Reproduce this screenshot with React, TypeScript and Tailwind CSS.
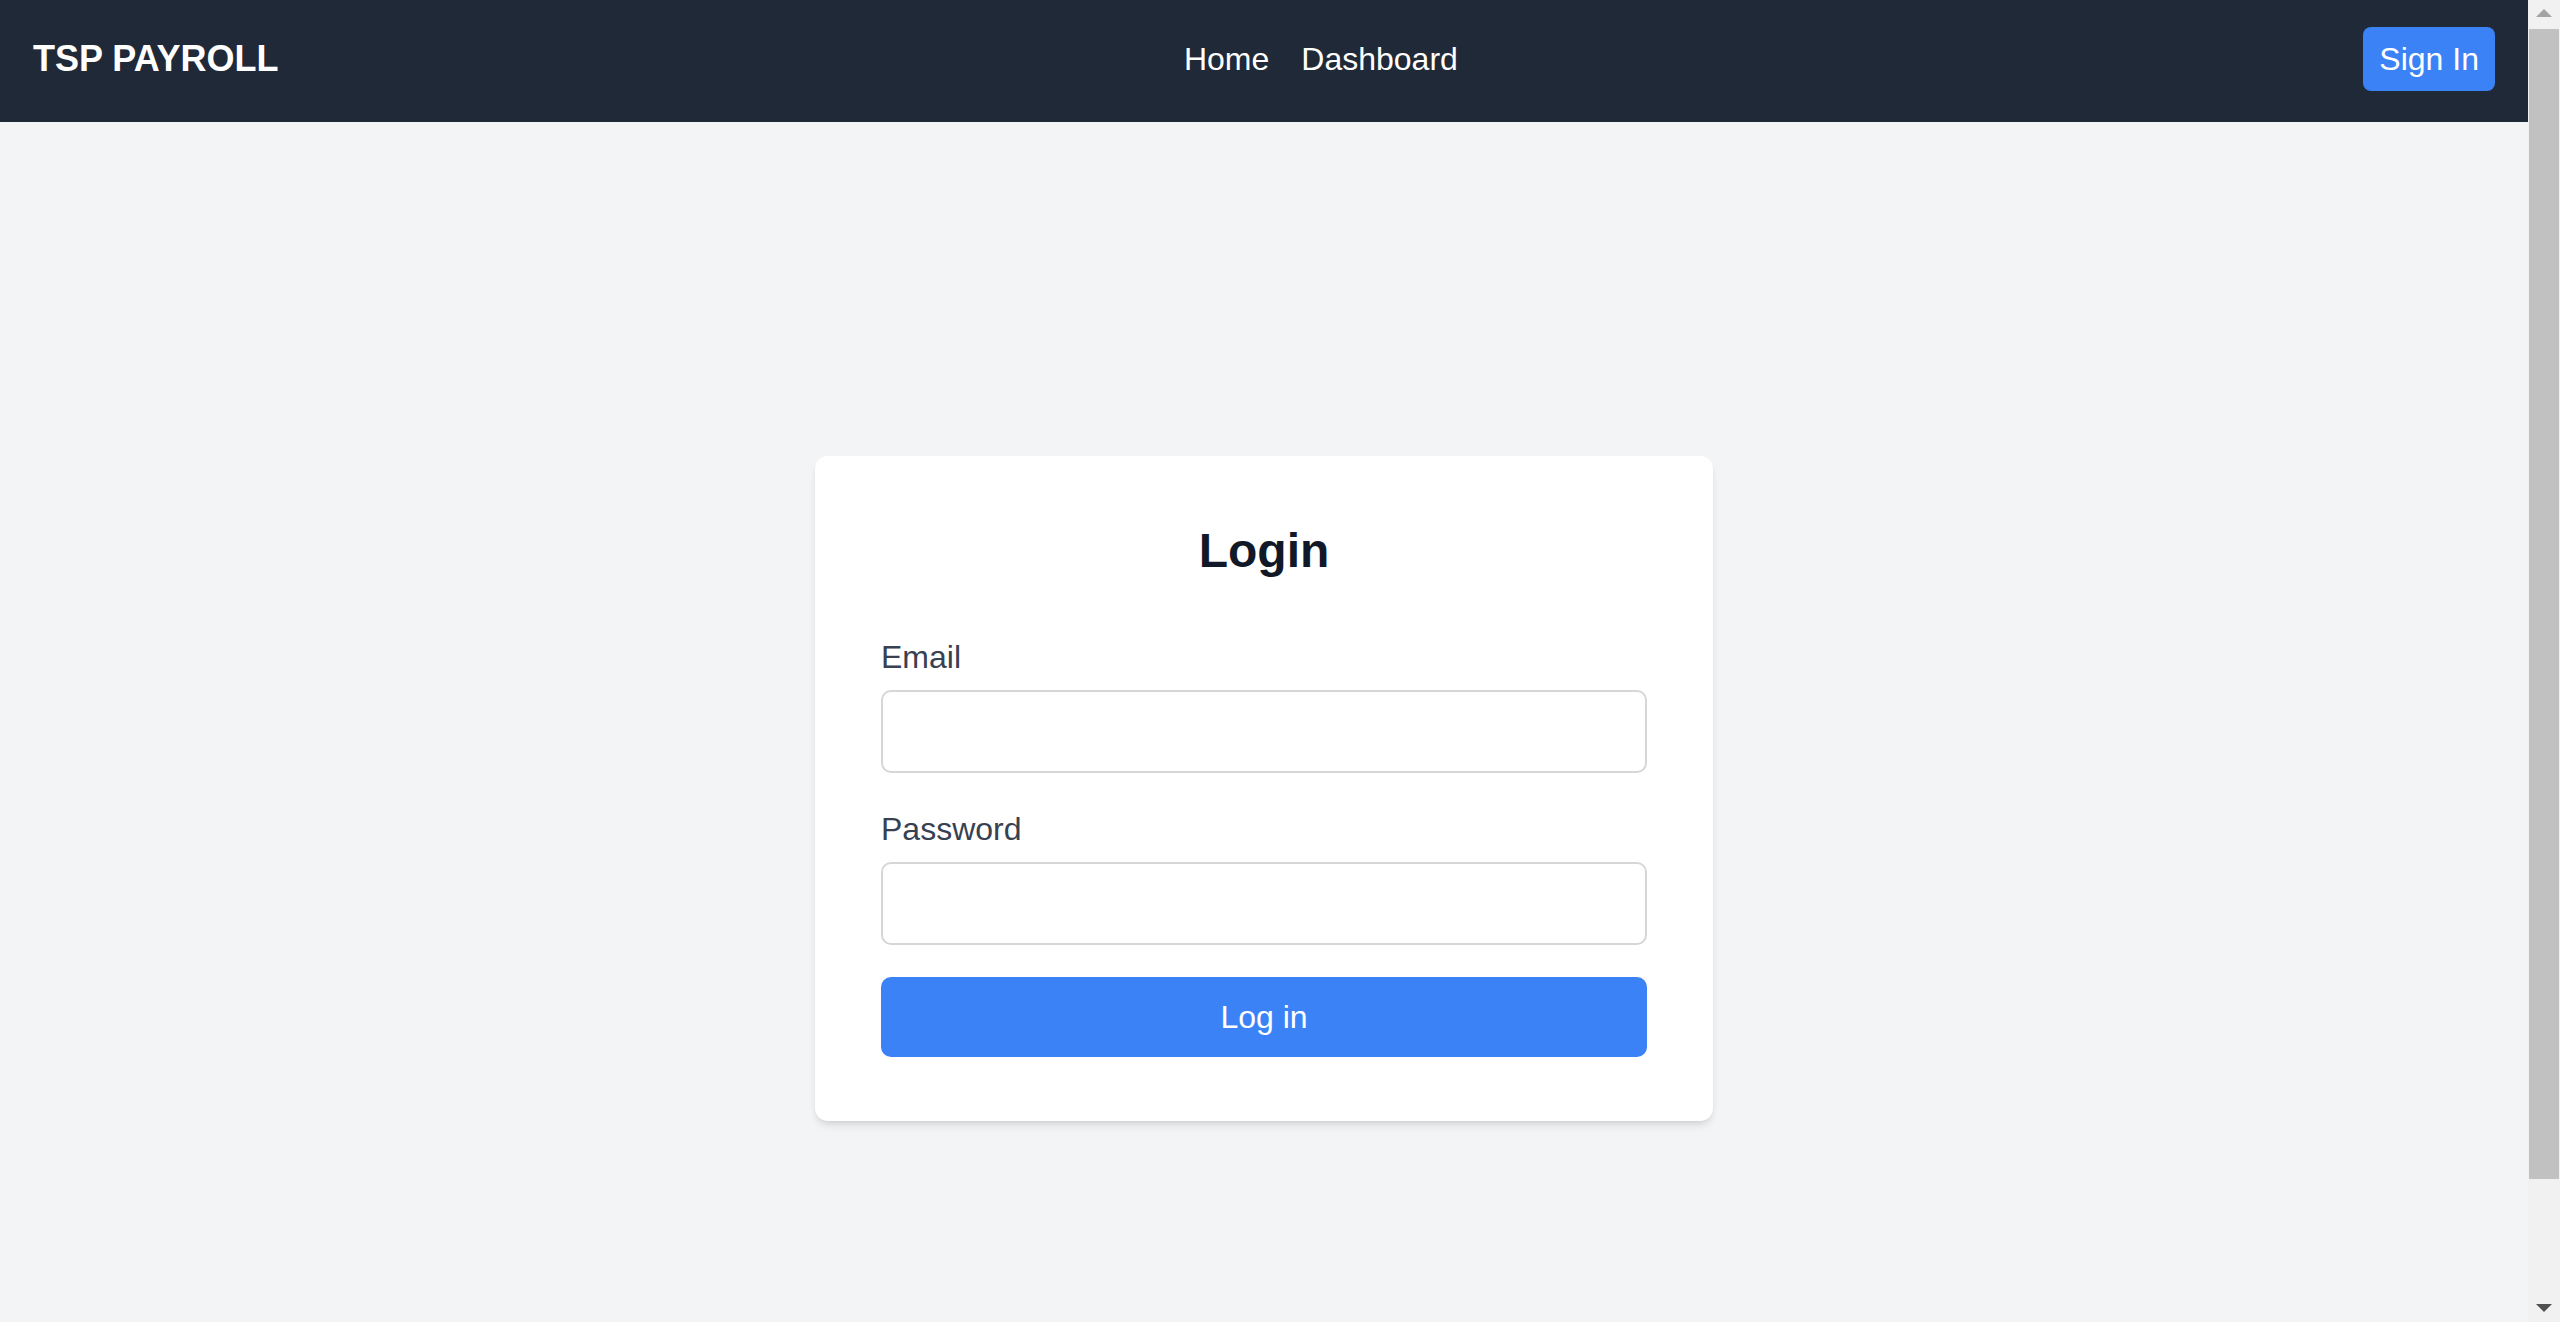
import { useState } from 'react';

function Scrollbar() {
  return (
    <div className="w-[32px] shrink-0 h-screen bg-[#f1f1f1] flex flex-col">
      <div className="h-[29px] flex justify-center pt-[9px]">
        <div className="w-0 h-0 border-x-[8px] border-x-transparent border-b-[8px] border-b-[#a3a3a3]" />
      </div>
      <div className="h-[1150px] mx-[1px] bg-[#c1c1c1]" />
      <div className="flex-1" />
      <div className="h-[29px] flex justify-center pt-[11px]">
        <div className="w-0 h-0 border-x-[8px] border-x-transparent border-t-[8px] border-t-[#505050]" />
      </div>
    </div>
  );
}

export default function App() {
  const [email, setEmail] = useState('');
  const [password, setPassword] = useState('');

  return (
    <div className="flex h-screen overflow-hidden bg-[#f3f4f6] font-['Liberation_Sans',Arial,sans-serif]">
      <div className="flex-1 min-w-0 h-screen overflow-hidden">
        {/* Navbar */}
        <header className="h-[122px] bg-[#1f2937] px-[33px] pb-[4px] flex items-center justify-between text-white">
          <div className="text-[36px] font-bold leading-none">TSP PAYROLL</div>
          <nav className="flex items-center gap-[32px] text-[32px] leading-none">
            <a href="#" className="text-white">Home</a>
            <a href="#" className="text-white">Dashboard</a>
          </nav>
          <button className="bg-[#3b82f6] text-white text-[32px] leading-[44.8px] px-[16px] py-[9.6px] rounded-[8px]">
            Sign In
          </button>
        </header>

        {/* Login card */}
        <main className="min-h-screen pt-[11px] flex items-center justify-center">
          <div className="w-[898px] bg-white rounded-[13px] px-[66px] pt-[66px] pb-[64px] shadow-[0_6px_10px_-2px_rgba(0,0,0,0.1),0_3px_6px_-3px_rgba(0,0,0,0.1)]">
            <h2 className="text-[48px] leading-[57.6px] font-bold text-[#111827] text-center mb-[55px]">
              Login
            </h2>
            <form onSubmit={(e) => e.preventDefault()}>
              <div className="mb-[34px]">
                <label className="block text-[32px] leading-[44.8px] text-[#374151] mb-[10px]">Email</label>
                <input
                  type="email"
                  value={email}
                  onChange={(e) => setEmail(e.target.value)}
                  className="block w-full h-[83px] border-2 border-[#d6d6d6] rounded-[10px] px-[16px] text-[32px] outline-none bg-white"
                />
              </div>
              <div className="mb-[32px]">
                <label className="block text-[32px] leading-[44.8px] text-[#374151] mb-[10px]">Password</label>
                <input
                  type="password"
                  value={password}
                  onChange={(e) => setPassword(e.target.value)}
                  className="block w-full h-[83px] border-2 border-[#d6d6d6] rounded-[10px] px-[16px] text-[32px] outline-none bg-white"
                />
              </div>
              <button
                type="submit"
                className="w-full h-[80px] bg-[#3b82f6] text-white text-[32px] rounded-[10px]"
              >
                Log in
              </button>
            </form>
          </div>
        </main>
      </div>
      <Scrollbar />
    </div>
  );
}
